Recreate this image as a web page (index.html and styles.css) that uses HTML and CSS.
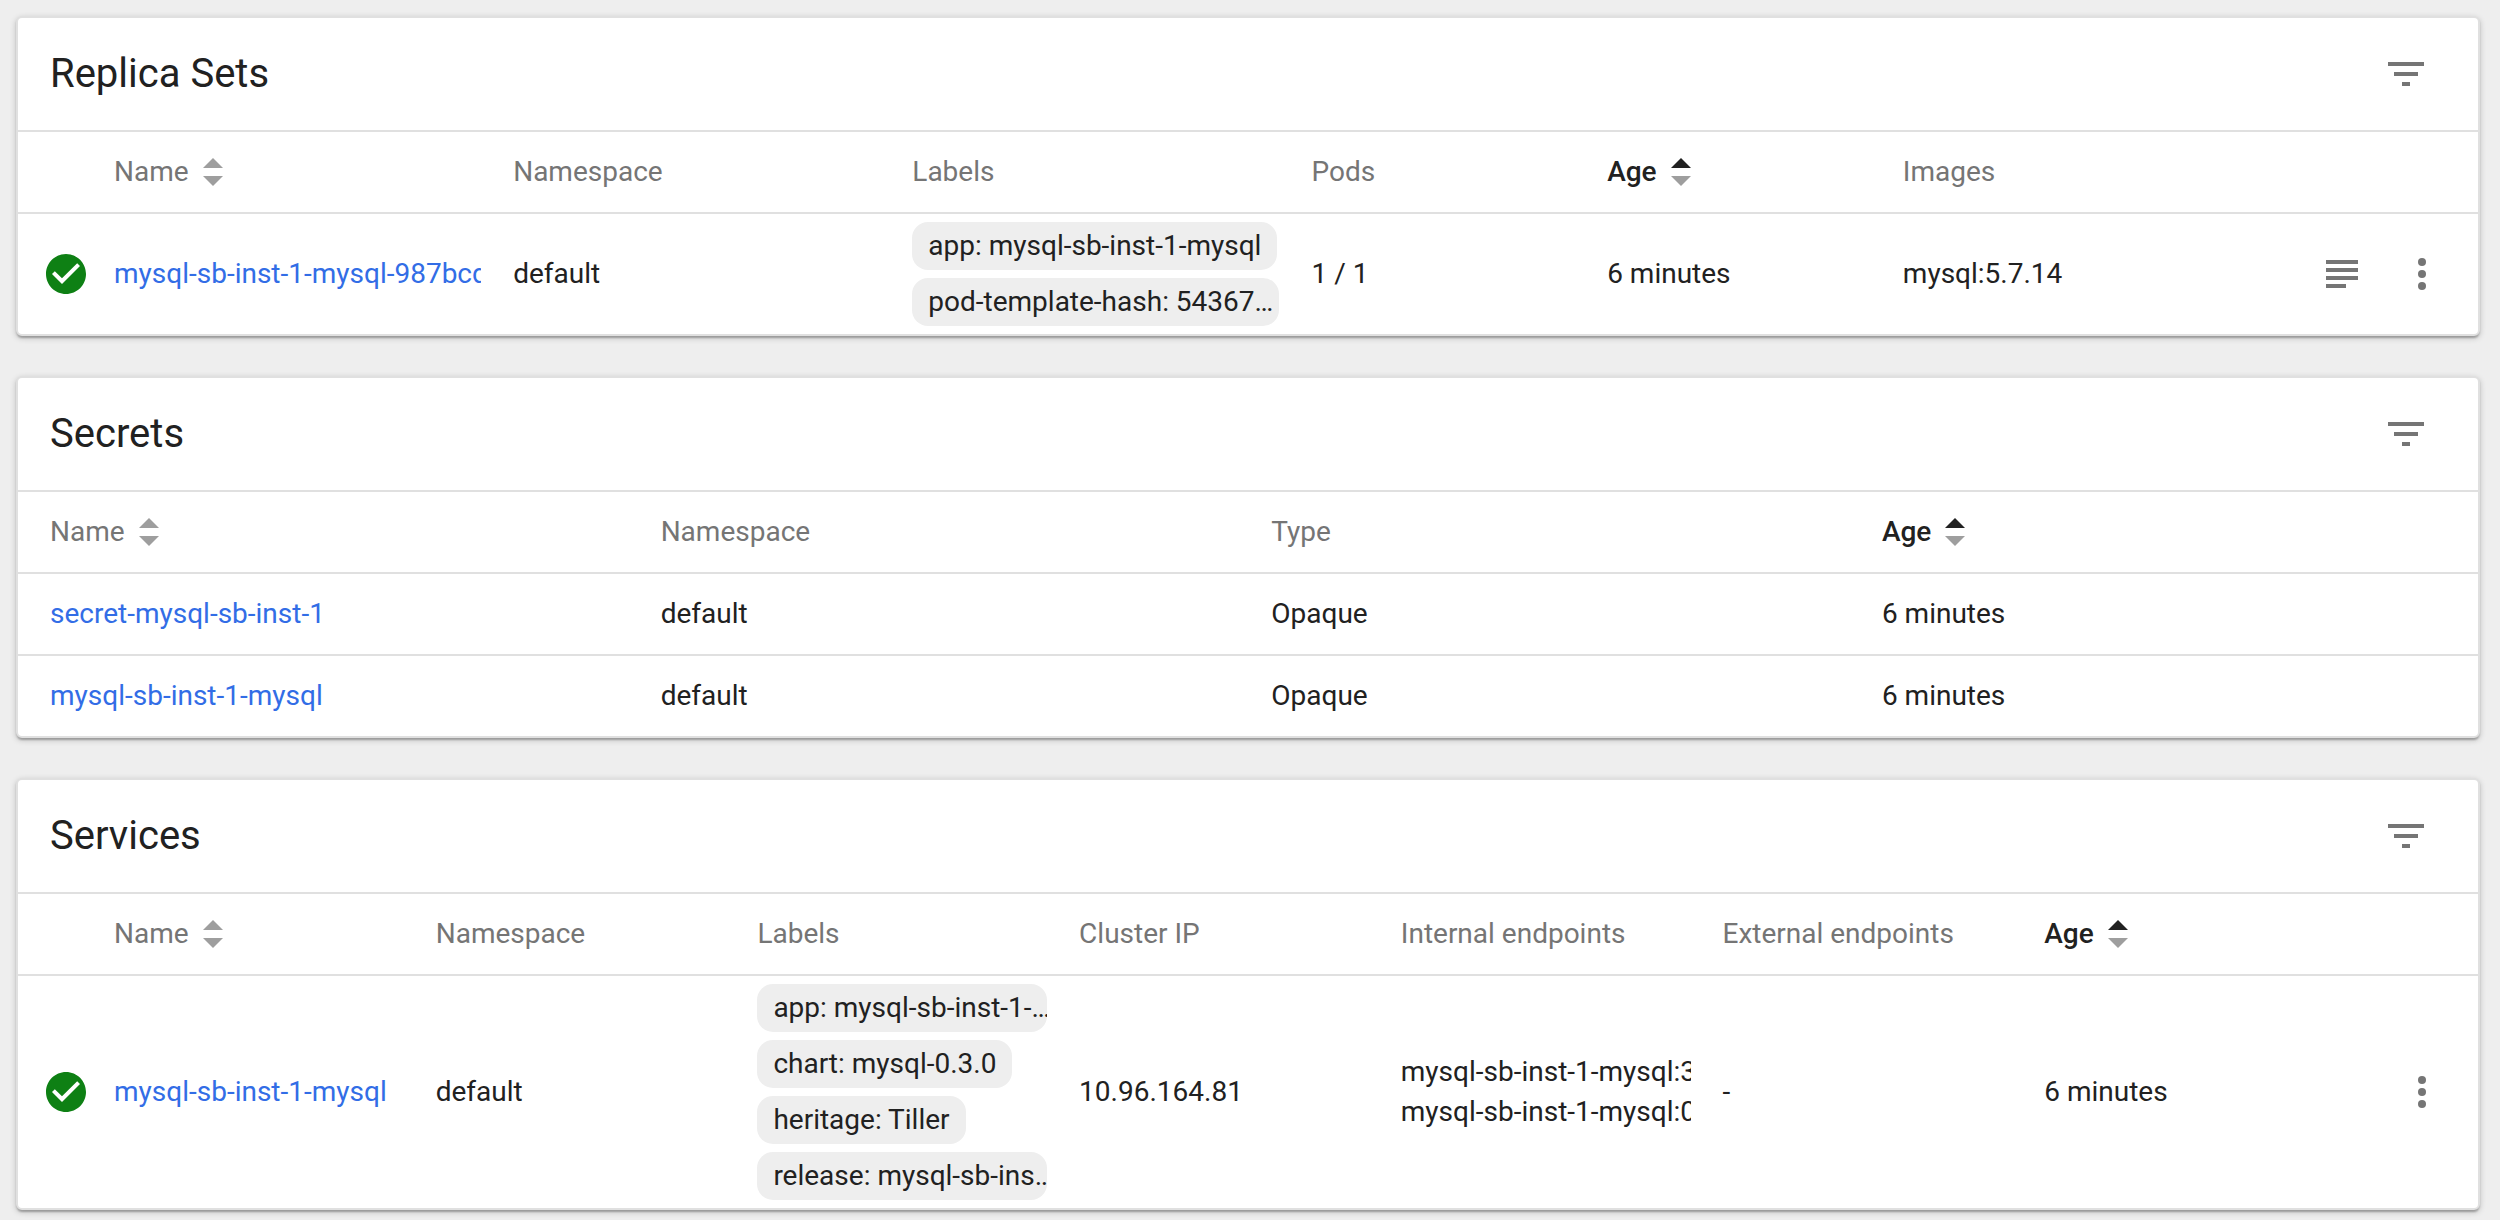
FILE: index.html
```html
<!DOCTYPE html>
<html lang="en">
<head>
<meta charset="utf-8">
<title>Workloads</title>
<link rel="stylesheet" href="styles.css">
</head>
<body>
<svg class="sprite" aria-hidden="true">
  <symbol id="filter" viewBox="0 0 24 24"><path d="M10 18h4v-2h-4v2zM3 6v2h18V6H3zm3 7h12v-2H6v2z"/></symbol>
  <symbol id="logs" viewBox="0 0 24 24"><path d="M4 5h16v2H4zM4 9h16v2H4zM4 13h16v2H4zM4 17h10v2H4z"/></symbol>
  <symbol id="more" viewBox="0 0 24 24"><circle cx="12" cy="6" r="2"/><circle cx="12" cy="12" r="2"/><circle cx="12" cy="18" r="2"/></symbol>
  <symbol id="ok" viewBox="0 0 24 24"><path d="M12 2C6.48 2 2 6.48 2 12s4.48 10 10 10 10-4.48 10-10S17.52 2 12 2zm-2 15l-5-5 1.41-1.41L10 14.17l7.59-7.59L19 8l-9 9z"/></symbol>
  <symbol id="sort" viewBox="0 0 24 24"><path class="up" d="M7 10l5-5 5 5z"/><path d="M7 14l5 5 5-5z"/></symbol>
  <symbol id="sort-up" viewBox="0 0 24 24"><path fill="#212121" d="M7 10l5-5 5 5z"/><path d="M7 14l5 5 5-5z"/></symbol>
</svg>
<main class="page">
  <section class="card">
    <header class="card-header">
      <h2 class="card-title">Replica Sets</h2>
      <button class="icon-button" type="button" aria-label="Filter replica sets"><svg class="icon"><use href="#filter"/></svg></button>
    </header>
    <table class="table replica-sets">
      <thead>
        <tr class="row">
          <th class="cell"></th>
          <th class="cell"><button class="sort" type="button">Name<svg class="icon"><use href="#sort"/></svg></button></th>
          <th class="cell">Namespace</th>
          <th class="cell">Labels</th>
          <th class="cell">Pods</th>
          <th class="cell"><button class="sort active" type="button">Age<svg class="icon"><use href="#sort-up"/></svg></button></th>
          <th class="cell">Images</th>
        </tr>
      </thead>
      <tbody>
        <tr class="row">
          <td class="status"><svg class="icon"><use href="#ok"/></svg></td>
          <td class="cell"><a class="link" href="#">mysql-sb-inst-1-mysql-987bcd5d</a></td>
          <td class="cell">default</td>
          <td class="cell">
            <ul class="chips">
              <li class="chip">app: mysql-sb-inst-1-mysql</li>
              <li class="chip">pod-template-hash: 54367…</li>
            </ul>
          </td>
          <td class="cell">1 / 1</td>
          <td class="cell">6 minutes</td>
          <td class="cell">mysql:5.7.14</td>
          <td class="actions">
            <button class="icon-button" type="button" aria-label="Logs"><svg class="icon"><use href="#logs"/></svg></button>
            <button class="icon-button" type="button" aria-label="Actions"><svg class="icon"><use href="#more"/></svg></button>
          </td>
        </tr>
      </tbody>
    </table>
  </section>

  <section class="card">
    <header class="card-header">
      <h2 class="card-title">Secrets</h2>
      <button class="icon-button" type="button" aria-label="Filter secrets"><svg class="icon"><use href="#filter"/></svg></button>
    </header>
    <table class="table secrets">
      <thead>
        <tr class="row">
          <th class="cell"><button class="sort" type="button">Name<svg class="icon"><use href="#sort"/></svg></button></th>
          <th class="cell">Namespace</th>
          <th class="cell">Type</th>
          <th class="cell"><button class="sort active" type="button">Age<svg class="icon"><use href="#sort-up"/></svg></button></th>
        </tr>
      </thead>
      <tbody>
        <tr class="row">
          <td class="cell"><a class="link" href="#">secret-mysql-sb-inst-1</a></td>
          <td class="cell">default</td>
          <td class="cell">Opaque</td>
          <td class="cell">6 minutes</td>
        </tr>
        <tr class="row">
          <td class="cell"><a class="link" href="#">mysql-sb-inst-1-mysql</a></td>
          <td class="cell">default</td>
          <td class="cell">Opaque</td>
          <td class="cell">6 minutes</td>
        </tr>
      </tbody>
    </table>
  </section>

  <section class="card">
    <header class="card-header">
      <h2 class="card-title">Services</h2>
      <button class="icon-button" type="button" aria-label="Filter services"><svg class="icon"><use href="#filter"/></svg></button>
    </header>
    <table class="table services">
      <thead>
        <tr class="row">
          <th class="cell"></th>
          <th class="cell"><button class="sort" type="button">Name<svg class="icon"><use href="#sort"/></svg></button></th>
          <th class="cell">Namespace</th>
          <th class="cell">Labels</th>
          <th class="cell">Cluster IP</th>
          <th class="cell">Internal endpoints</th>
          <th class="cell">External endpoints</th>
          <th class="cell"><button class="sort active" type="button">Age<svg class="icon"><use href="#sort-up"/></svg></button></th>
        </tr>
      </thead>
      <tbody>
        <tr class="row">
          <td class="status"><svg class="icon"><use href="#ok"/></svg></td>
          <td class="cell"><a class="link" href="#">mysql-sb-inst-1-mysql</a></td>
          <td class="cell">default</td>
          <td class="cell">
            <ul class="chips">
              <li class="chip">app: mysql-sb-inst-1-…</li>
              <li class="chip">chart: mysql-0.3.0</li>
              <li class="chip">heritage: Tiller</li>
              <li class="chip">release: mysql-sb-ins…</li>
            </ul>
          </td>
          <td class="cell">10.96.164.81</td>
          <td class="cell">
            <div class="clip">mysql-sb-inst-1-mysql:3306 TCP</div>
            <div class="clip">mysql-sb-inst-1-mysql:0 TCP</div>
          </td>
          <td class="cell">-</td>
          <td class="cell">6 minutes</td>
          <td class="actions">
            <button class="icon-button" type="button" aria-label="Actions"><svg class="icon"><use href="#more"/></svg></button>
          </td>
        </tr>
      </tbody>
    </table>
  </section>
</main>
</body>
</html>
```
FILE: styles.css
```css
* {
  box-sizing: border-box;
}

body {
  margin: 0;
  background: #eee;
  color: #212121;
  font: 400 28px/40px Roboto, sans-serif;
}

.sprite {
  display: none;
}

.page {
  display: flex;
  flex-direction: column;
  gap: 40px;
  padding: 16px 20px 10px 16px;
}

.card {
  background: #fff;
  border: 2px solid #e0e0e0;
  border-radius: 6px;
  box-shadow: 0 2px 6px rgba(0, 0, 0, .2), 0 2px 2px rgba(0, 0, 0, .14), 0 4px 2px -2px rgba(0, 0, 0, .12);
}

.card-header {
  display: flex;
  align-items: center;
  justify-content: space-between;
  padding: 16px 32px;
}

.card-title {
  margin: 0;
  font-size: 40px;
  font-weight: 400;
  line-height: 48px;
}

.icon {
  flex: none;
  display: block;
  width: 48px;
  height: 48px;
  fill: currentColor;
}

.icon-button {
  display: flex;
  align-items: center;
  justify-content: center;
  width: 80px;
  height: 80px;
  padding: 0;
  border: 0;
  background: none;
  color: #757575;
}

.table,
.table thead,
.table tbody {
  display: block;
}

.row {
  display: grid;
  align-items: center;
  min-height: 82px;
  padding: 0 16px 0 32px;
  border-top: 2px solid #e0e0e0;
}

.replica-sets .row {
  grid-template-columns: 64px repeat(3, minmax(0, 27fr)) repeat(2, minmax(0, 20fr)) minmax(0, 27fr) 160px;
}

.secrets .row {
  grid-template-columns: repeat(3, minmax(0, 20fr)) minmax(0, 19fr);
}

.services .row {
  grid-template-columns: 64px repeat(6, minmax(0, 20fr)) minmax(0, 21fr) 80px;
}

.cell {
  padding: 0 32px 0 0;
  text-align: left;
  white-space: nowrap;
}

th.cell {
  color: #757575;
  font-weight: 400;
}

.sort {
  display: flex;
  align-items: center;
  padding: 0;
  border: 0;
  background: none;
  color: #757575;
  font: inherit;
}

.sort.active {
  color: #212121;
  font-weight: 500;
}

.sort .icon {
  fill: #9e9e9e;
}

.status {
  padding: 0;
  color: #0e8014;
}

.status .icon {
  margin-left: -8px;
}

.link,
.clip {
  display: block;
  overflow: hidden;
}

.link {
  color: #326de6;
  text-decoration: none;
}

.chips {
  display: flex;
  flex-direction: column;
  align-items: flex-start;
  gap: 8px;
  margin: 0;
  padding: 8px 0;
  list-style: none;
}

.chip {
  max-width: 100%;
  padding: 4px 16px;
  overflow: hidden;
  border-radius: 16px;
  background: #eee;
}

.actions {
  display: flex;
  justify-content: flex-end;
  padding: 0;
}
```
